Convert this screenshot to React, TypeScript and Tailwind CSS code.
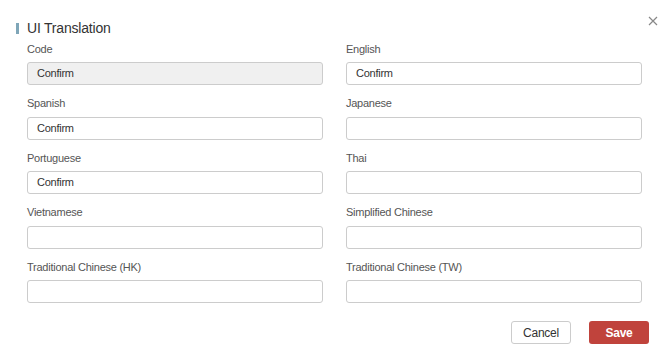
import * as React from 'react';

const fields = [
  { label: 'Code', value: 'Confirm', readOnly: true },
  { label: 'English', value: 'Confirm' },
  { label: 'Spanish', value: 'Confirm' },
  { label: 'Japanese', value: '' },
  { label: 'Portuguese', value: 'Confirm' },
  { label: 'Thai', value: '' },
  { label: 'Vietnamese', value: '' },
  { label: 'Simplified Chinese', value: '' },
  { label: 'Traditional Chinese (HK)', value: '' },
  { label: 'Traditional Chinese (TW)', value: '' },
];

function Field({ label, value, readOnly }: { label: string; value: string; readOnly?: boolean }) {
  return (
    <div className="flex flex-col">
      <label className="text-[11px] leading-[15px] tracking-[-0.25px] text-[#555] mb-[5.5px]">{label}</label>
      <div
        className={`h-[23px] flex items-center px-[9px] border border-[#ccc] rounded-[3px] text-[11px] tracking-[-0.25px] text-[#333] ${
          readOnly ? 'bg-[#f0f0f0]' : 'bg-white'
        }`}
      >
        {value}
      </div>
    </div>
  );
}

export default function App() {
  return (
    <div className="w-[669px] h-[362px] bg-white font-['Liberation_Sans',Arial,sans-serif] relative overflow-hidden">
      <div className="pt-[19px] px-[27px]">
        <div className="flex items-center h-[18px] -ml-[11px]">
          <span className="w-[3px] h-[11px] bg-[#7fa6b8] mr-[8px]" />
          <h1 className="text-[14px] tracking-[-0.2px] text-[#333] leading-[18px]">UI Translation</h1>
        </div>

        <div className="grid grid-cols-2 gap-x-[23px] gap-y-[11px] mt-[4.5px]">
          {fields.map((f) => (
            <Field key={f.label} {...f} />
          ))}
        </div>

        <div className="flex justify-end gap-[18px] mt-[18px] mr-[-7px]">
          <button className="w-[60px] h-[23px] border border-[#ccc] rounded-[3px] bg-white text-[12px] tracking-[-0.25px] text-[#333]">
            Cancel
          </button>
          <button className="w-[60px] h-[23px] rounded-[3px] bg-[#c0433c] text-[12px] tracking-[-0.25px] font-bold text-white">
            Save
          </button>
        </div>
      </div>

      <button className="absolute top-[15px] left-[647px] w-[12px] h-[12px] flex items-center justify-center">
        <svg width="10" height="10" viewBox="0 0 10 10" fill="none" stroke="#888" strokeWidth="1.2">
          <path d="M1 1L9 9M9 1L1 9" />
        </svg>
      </button>
    </div>
  );
}
